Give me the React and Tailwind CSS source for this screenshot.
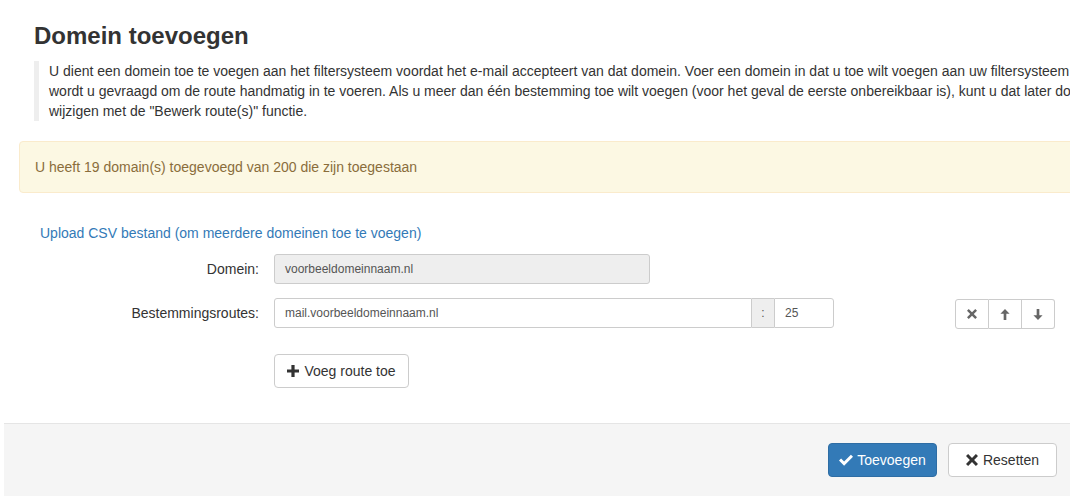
import React from "react";

const PlusIcon = ({ className }) => (
  <svg viewBox="0 0 12 12" className={className} fill="currentColor">
    <path d="M4.4 0h3.2v4.4H12v3.2H7.6V12H4.4V7.6H0V4.4h4.4z" />
  </svg>
);
const CheckIcon = ({ className }) => (
  <svg viewBox="0 0 14 12" className={className} fill="currentColor">
    <path d="M0 6.6l2.1-2.1 3 3L11.9 0.7 14 2.8 5.1 11.7z" />
  </svg>
);
const XIcon = ({ className }) => (
  <svg viewBox="0 0 12 12" className={className} fill="currentColor">
    <path d="M2.1 0L6 3.9 9.9 0 12 2.1 8.1 6 12 9.9 9.9 12 6 8.1 2.1 12 0 9.9 3.9 6 0 2.1z" />
  </svg>
);
const ArrowUp = ({ className }) => (
  <svg viewBox="0 0 12 13" className={className} fill="currentColor">
    <path d="M6 0l5.5 5.5H7.6V13H4.4V5.5H0.5z" />
  </svg>
);
const ArrowDown = ({ className }) => (
  <svg viewBox="0 0 12 13" className={className} fill="currentColor">
    <path d="M6 13l5.5-5.5H7.6V0H4.4v7.5H0.5z" />
  </svg>
);

export default function App() {
  return (
    <div
      className="w-[1070px] h-[496px] overflow-hidden bg-white text-[#333] text-[14px] leading-[20px]"
      style={{ fontFamily: '"Liberation Sans", Arial, sans-serif' }}
    >
      <h3 className="ml-[34px] mt-[23px] text-[24px] leading-[26px] font-bold text-[#333]">
        Domein toevoegen
      </h3>
      <div className="ml-[34px] mt-[12px] w-[1100px] border-l-[5px] border-[#eeeeee] pl-[10px] whitespace-nowrap">
        <div>
          U dient een domein toe te voegen aan het filtersysteem voordat het e-mail accepteert van dat domein. Voer een domein in dat u toe wilt voegen aan uw filtersysteem en
        </div>
        <div>
          wordt u gevraagd om de route handmatig in te voeren. Als u meer dan één bestemming toe wilt voegen (voor het geval de eerste onbereikbaar is), kunt u dat later doen en
        </div>
        <div>wijzigen met de "Bewerk route(s)" functie.</div>
      </div>

      <div className="ml-[19px] mt-[20px] w-[1100px] rounded-[4px] border border-[#faebcc] bg-[#fcf8e3] px-[15px] py-[15px] text-[#8a6d3b]">
        U heeft 19 domain(s) toegevoegd van 200 die zijn toegestaan
      </div>

      <div className="ml-[40px] mt-[30px] text-[#337ab7]">
        Upload CSV bestand (om meerdere domeinen toe te voegen)
      </div>

      <div className="mt-[11px] flex items-center">
        <div className="w-[259px] text-right">Domein:</div>
        <div className="ml-[15px] w-[376px] h-[30px] rounded-[3px] border border-[#ccc] bg-[#eeeeee] px-[10px] text-[12px] leading-[28px] text-[#555]">
          voorbeeldomeinnaam.nl
        </div>
      </div>

      <div className="mt-[14px] flex items-start">
        <div className="w-[259px] text-right leading-[30px]">Bestemmingsroutes:</div>
        <div className="ml-[15px] flex h-[30px]">
          <div className="w-[478px] rounded-l-[3px] border border-[#ccc] px-[10px] text-[12px] leading-[28px] text-[#555]">
            mail.voorbeeldomeinnaam.nl
          </div>
          <div className="w-[22px] border-y border-[#ccc] bg-[#eeeeee] text-center text-[12px] leading-[28px] text-[#555]">
            :
          </div>
          <div className="w-[60px] rounded-r-[3px] border border-[#ccc] px-[10px] text-[12px] leading-[28px] text-[#555]">
            25
          </div>
        </div>
        <div className="ml-[121px] mt-[1px] flex h-[30px] text-[#666]">
          <div className="flex w-[34px] items-center justify-center rounded-l-[3px] border border-[#ccc]">
            <XIcon className="w-[10px] h-[10px]" />
          </div>
          <div className="flex w-[33px] items-center justify-center border-y border-r border-[#ccc]">
            <ArrowUp className="w-[10px] h-[11px]" />
          </div>
          <div className="flex w-[33px] items-center justify-center rounded-r-[3px] border-y border-r border-[#ccc]">
            <ArrowDown className="w-[10px] h-[11px]" />
          </div>
        </div>
      </div>

      <div className="ml-[274px] mt-[25px] flex h-[34px] w-[135px] items-center justify-center gap-[5px] rounded-[4px] border border-[#ccc] bg-white text-[#333]">
        <PlusIcon className="w-[12px] h-[12px]" />
        <span>Voeg route toe</span>
      </div>

      <div className="ml-[4px] mt-[35px] flex h-[80px] justify-end gap-[11px] border-t border-[#e5e5e5] bg-[#f5f5f5] pr-[13px] pt-[19px]">
        <div className="flex h-[34px] w-[109px] items-center justify-center gap-[4px] rounded-[4px] border border-[#2e6da4] bg-[#337ab7] text-white">
          <CheckIcon className="w-[14px] h-[12px]" />
          <span>Toevoegen</span>
        </div>
        <div className="flex h-[34px] w-[109px] items-center justify-center gap-[5px] rounded-[4px] border border-[#ccc] bg-white text-[#333]">
          <XIcon className="w-[12px] h-[12px]" />
          <span>Resetten</span>
        </div>
      </div>
    </div>
  );
}
